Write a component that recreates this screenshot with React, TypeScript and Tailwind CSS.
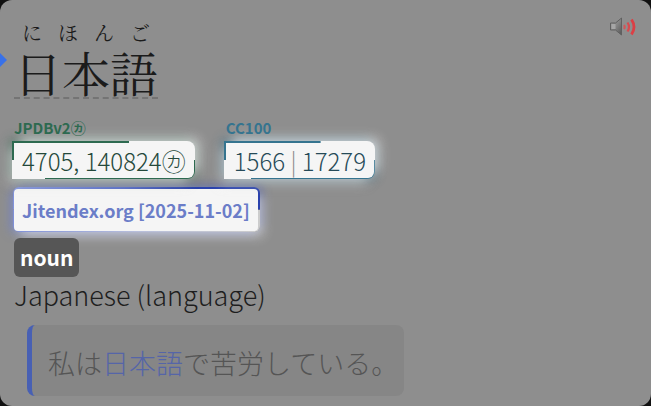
import React from 'react'

import { cva } from 'class-variance-authority'

const frequency = cva('w-fit rounded-r-lg bg-[#f5f5f5] bg-no-repeat pt-0.5 pr-px pb-px pl-0.5 [background-position:0_0,100%_100%] [background-size:64%_50%,82%_50%]', {
  variants: {
    tone: {
      green:
        'bg-[image:linear-gradient(#2d6a50,#2d6a50),linear-gradient(#2d6a50,#2d6a50)] text-[#24483a] shadow-[6px_-5px_12px_-2px_rgba(245,245,245,0.7),-5px_6px_12px_-2px_rgba(245,245,245,0.5),-3px_-3px_10px_rgba(45,106,80,0.4),3px_3px_10px_rgba(45,106,80,0.3)]',
      teal: 'bg-[image:linear-gradient(#35748f,#35748f),linear-gradient(#35748f,#35748f)] text-[#264a58] shadow-[6px_-5px_12px_-2px_rgba(245,245,245,0.7),-5px_6px_12px_-2px_rgba(245,245,245,0.5),-3px_-3px_10px_rgba(53,116,143,0.4),3px_3px_10px_rgba(53,116,143,0.3)]',
    },
  },
})

const frequencyLabel = cva('mb-px pl-0.5 text-[15px] leading-6 font-bold', {
  variants: {
    tone: {
      green: 'text-[#2d6a50]',
      teal: 'text-[#35748f]',
    },
  },
})

interface IFrequency {
  label: React.ReactNode
  tone: 'green' | 'teal'
  children: React.ReactNode
}

const Frequency: React.FC<IFrequency> = ({ label, tone, children }) => (
  <div>
    <div className={frequencyLabel({ tone })}>{label}</div>
    <div className={frequency({ tone })}>
      <div className="rounded-r-md bg-[#f5f5f5] px-2 text-2xl leading-[35px] font-light whitespace-nowrap">
        {children}
      </div>
    </div>
  </div>
)

const SpeakerIcon = () => (
  <svg className="block" width="28" height="22" viewBox="0 0 28 22" aria-hidden="true">
    <defs>
      <linearGradient id="cone" x1="0" y1="0" x2="1" y2="1">
        <stop offset="0" stopColor="#999" />
        <stop offset="0.5" stopColor="#858585" />
        <stop offset="1" stopColor="#555" />
      </linearGradient>
    </defs>
    <path d="M1.500 7h5l6-5v17l-6-5h-5z" fill="url(#cone)" stroke="#606060" />
    <path d="M2.500 8h4v5h-4z" fill="#a6a6a6" />
    <path d="M15 9q1.500 2 0 4" fill="none" stroke="#d45558" strokeWidth="2" />
    <path d="M18.500 6.500q3 4.500 0 9" fill="none" stroke="#d84a4f" strokeWidth="2.200" />
    <path d="M22.500 3.500q5 7.500 0 15" fill="none" stroke="#dc3f45" strokeWidth="2.800" />
  </svg>
)

const Headword = () => (
  <h1 className="w-fit pt-[5px] font-['Noto_Serif_CJK_JP','Noto_Serif_JP','Noto_Sans_CJK_JP',serif] font-normal text-[#1b1b1b]">
    <span className="mb-0.5 flex justify-around text-xl leading-6">
      {['に', 'ほ', 'ん', 'ご'].map((kana) => (
        <span key={kana}>{kana}</span>
      ))}
    </span>
    <span className="block border-b-2 border-dashed border-[#747474] text-5xl leading-[50px]">日本語</span>
  </h1>
)

export default function App() {
  return (
    <div className="bg-[#111]">
      <main
        className="relative overflow-hidden rounded-xl bg-[#8e8e8e] px-3.5 pt-4 pb-2.5 font-['Noto_Sans_CJK_JP',sans-serif] text-[#1e1e1e]"
        lang="ja"
      >
        <span className="absolute top-[53px] left-0 size-0 border-y-[7px] border-l-[7px] border-y-transparent border-l-[#3871e8]" />

        <header className="flex items-start justify-between">
          <Headword />
          <button type="button" aria-label="Play audio">
            <SpeakerIcon />
          </button>
        </header>

        <section className="-ml-0.5 mt-[17px] flex gap-[29px]">
          <Frequency label="JPDBv2㋕" tone="green">
            4705, 140824㋕
          </Frequency>
          <Frequency label="CC100" tone="teal">
            1566 <span className="text-[#8a8a8a]">|</span> 17279
          </Frequency>
        </section>

        <section className="mt-2">
          <div className="-ml-px w-fit rounded-md bg-[image:linear-gradient(to_right,#8293dc,#5268c6_45%,#2b42ad_65%),linear-gradient(to_right,#7f90d8,#b8bfdc_50%,#cccccc)] bg-no-repeat pt-0.5 pr-0.5 pb-px pl-px shadow-[5px_6px_12px_-2px_rgba(245,245,245,0.6),-4px_2px_10px_-1px_rgba(110,130,215,0.6),4px_-3px_10px_-1px_rgba(50,70,170,0.4)] [background-position:0_0,0_100%] [background-size:100%_50%,100%_50%]">
            <div className="rounded bg-[#f5f5f5] px-2 text-lg leading-[42px] font-bold text-[#6b7dc8]">
              Jitendex.org [2025-11-02]
            </div>
          </div>

          <span className="mt-1.5 block w-fit rounded-md bg-[#565656] px-1.5 text-[21px] leading-[39px] font-bold text-white">
            noun
          </span>
          <p className="text-[27px] leading-9 font-light">Japanese (language)</p>

          <blockquote className="mt-3 ml-[13px] w-fit rounded-lg border-l-[5px] border-[#4860b4] bg-[#868686] pt-[18px] pr-1.5 pb-3.5 pl-4 text-[27px] leading-[39px] font-light text-[#555]">
            私は<span className="text-[#5565a8]">日本語</span>で苦労している。
          </blockquote>
        </section>
      </main>
    </div>
  )
}
